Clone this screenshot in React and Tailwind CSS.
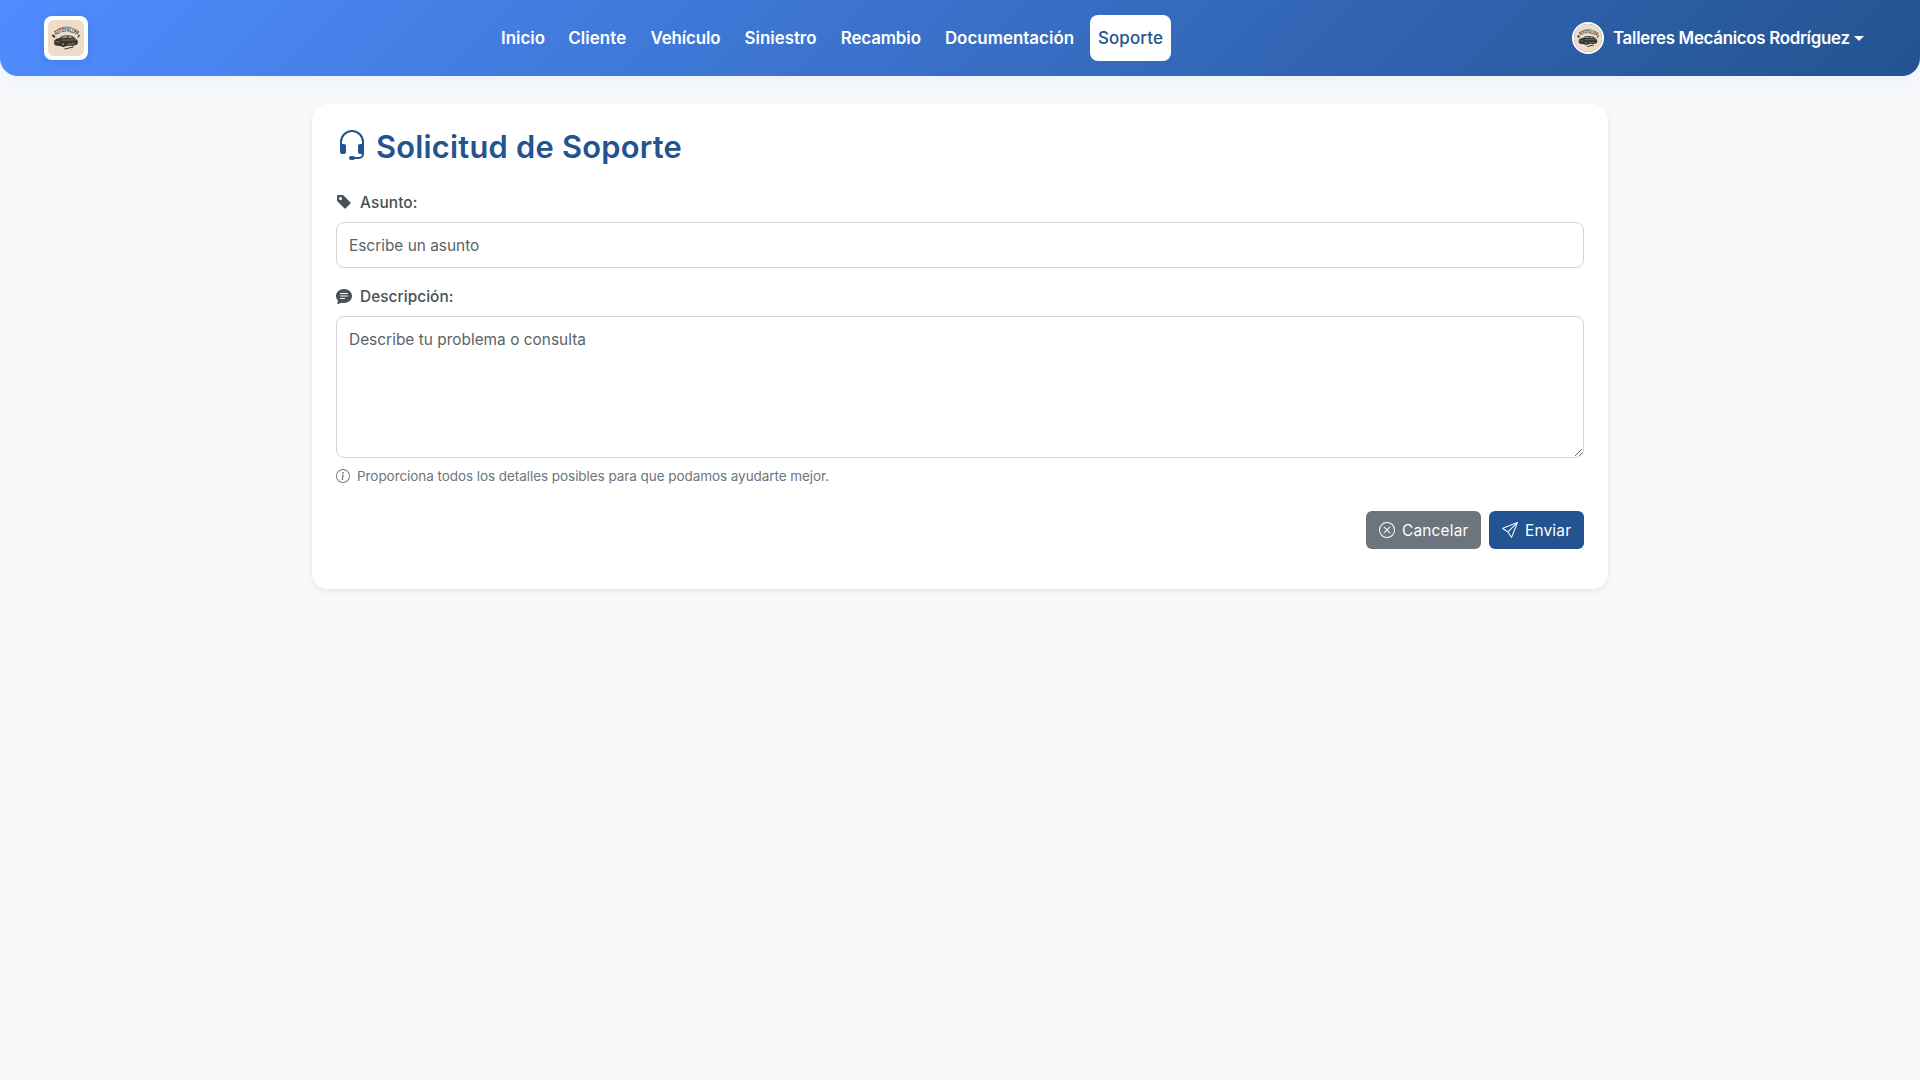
import {
  BsChatTextFill,
  BsHeadset,
  BsInfoCircle,
  BsSend,
  BsTagFill,
  BsXCircle,
} from 'react-icons/bs';

const links = [
  { label: 'Inicio', look: 'w-[59px] pl-px font-semibold text-white' },
  { label: 'Cliente', look: 'w-[74.5px] font-semibold tracking-[0.08px] text-white' },
  { label: 'Vehículo', look: 'w-[86px] font-semibold tracking-[-0.12px] text-white' },
  { label: 'Siniestro', look: 'w-[88px] font-semibold text-white' },
  { label: 'Recambio', look: 'w-[96.5px] font-semibold tracking-[-0.1px] text-white' },
  { label: 'Documentación', look: 'w-[145px] font-semibold tracking-[0.03px] text-white' },
  { label: 'Soporte', look: 'w-[81px] bg-white font-medium tracking-[0.13px] text-[#235390]' },
];

function Emblem({ id, className }) {
  return (
    <svg viewBox="0 0 36 36" className={className} aria-hidden="true">
      <rect width="36" height="36" fill="#ecdcc8" />
      <path id={id} d="M7.8 15.2Q18 8.6 29.6 15.2" fill="none" />
      <path d="M6.4 11.6Q18 2.6 28.8 10.8" fill="none" stroke="#5d564e" strokeWidth="0.7" />
      <text
        className="font-['Liberation_Sans',sans-serif] text-[6px] font-bold"
        fill="#2f2c28"
        textLength="23"
        lengthAdjust="spacingAndGlyphs"
      >
        <textPath href={`#${id}`}>AUTOTALLER</textPath>
      </text>
      <path d="M3.6 15.6l2.2-1.4 1.7 2.8-1.4.9zM29.2 17.2l1.8-2.6 1 .7-1.6 2.4z" fill="#3b3732" />
      <path
        d="M6.2 20.4Q8 18.2 11.4 18L14.5 15.8Q20 14.8 24.5 16L27.8 18.7 29.6 20.4 29.9 23.6 28.4 25H26.6Q25 26.6 23 25.4L17.5 26.2Q15 28 12.6 26L7.4 25.4 6 23.6Z"
        fill="#393631"
      />
      <path d="M13 17.9L15.1 16.4 19 16.1 19.2 17.8ZM20.2 16.1Q23.4 16.2 25.6 17.9L20.4 17.9Z" fill="#a79d90" />
      <path d="M7.4 21.8H12M13.5 20.2L28 19.8M19 24.3L24.6 23.6" stroke="#a0968a" strokeWidth="0.6" />
      <circle cx="15.2" cy="24.2" r="1.1" fill="#8b8277" />
      <circle cx="25.4" cy="23.6" r="0.9" fill="#8b8277" />
      <path d="M16 28.8L21 27.4 25.8 26.2 25.2 27.5 16.8 29.5Z" fill="#3b3732" />
    </svg>
  );
}

function Navbar() {
  return (
    <nav className="flex h-19 items-center rounded-b-[18px] bg-[linear-gradient(135deg,#4f8cff_0%,#235390_100%)] pl-11 shadow-[0_4px_24px_rgba(79,140,255,0.08)]">
      <div className="flex size-11 rounded-lg bg-white p-1 shadow-[0_2px_8px_rgba(0,0,0,0.08)]">
        <Emblem id="brand-arc" className="size-9 rounded-md" />
      </div>
      <div className="ml-[405px] flex gap-2 text-[16.9px]">
        {links.map(({ label, look }) => (
          <a
            key={label}
            href="#"
            className={`flex h-[46px] items-center justify-center rounded-lg pt-0.5 whitespace-nowrap ${look}`}
          >
            {label}
          </a>
        ))}
      </div>
      <button className="mr-14 ml-auto flex items-center text-[16.9px] font-semibold tracking-[-0.3px] text-white">
        <Emblem id="avatar-arc" className="mr-[9px] size-8 rounded-full border-2 border-white" />
        <span className="w-[236px] pt-0.5 text-left whitespace-nowrap">Talleres Mecánicos Rodríguez</span>
        <span className="ml-[5px] border-x-[5px] border-t-[5px] border-x-transparent border-t-white" />
      </button>
    </nav>
  );
}

export default function App() {
  return (
    <div className="min-h-screen bg-[#f8f9fb] font-[Inter,sans-serif] text-[#495057]">
      <Navbar />
      <main className="mx-auto mt-7 h-[485px] w-[1296px] rounded-2xl bg-white px-6 pt-6 shadow-[0_2px_6px_rgba(0,0,0,0.08)]">
        <h1 className="flex h-9 items-center gap-2 text-[30.8px] font-semibold tracking-[0.24px] text-[#235390]">
          <BsHeadset className="size-8" />
          <span className="pt-0.5">Solicitud de Soporte</span>
        </h1>
        <label
          htmlFor="subject"
          className="mt-[26px] flex h-6 items-center gap-2 text-[15.4px] font-medium tracking-[0.12px]"
        >
          <BsTagFill className="size-4" />
          <span className="pt-0.5">Asunto:</span>
        </label>
        <input
          id="subject"
          placeholder="Escribe un asunto"
          className="mt-2 block h-[46px] w-full rounded-lg border border-[#ced4da] bg-white px-3 text-[15.4px] placeholder:text-[#5c6268]"
        />
        <label
          htmlFor="description"
          className="mt-4 flex h-6 items-center gap-2 text-[15.4px] font-medium tracking-[0.05px]"
        >
          <BsChatTextFill className="size-4" />
          <span className="pt-0.5">Descripción:</span>
        </label>
        <textarea
          id="description"
          placeholder="Describe tu problema o consulta"
          className="mt-2 block h-[142px] w-full resize-y rounded-lg border border-[#ced4da] bg-white px-3 py-[11px] text-[15.4px] leading-6 tracking-[0.02px] placeholder:text-[#5c6268]"
        />
        <p className="mt-2 flex h-5 items-center gap-[7px] text-[13.5px] tracking-[-0.06px] text-[#6c757d]">
          <BsInfoCircle className="size-3.5" />
          Proporciona todos los detalles posibles para que podamos ayudarte mejor.
        </p>
        <div className="mt-[25px] flex justify-end gap-2 text-[15.4px] tracking-[0.2px] text-white">
          <button className="flex h-[38px] w-[115px] items-center gap-[7px] rounded-md bg-[#6c757d] pl-[13px]">
            <BsXCircle className="size-4" />
            <span className="pt-0.5">Cancelar</span>
          </button>
          <button className="flex h-[38px] w-[95px] items-center gap-[7px] rounded-md bg-[#235390] pl-[13px]">
            <BsSend className="size-4" />
            <span className="pt-0.5">Enviar</span>
          </button>
        </div>
      </main>
    </div>
  );
}
